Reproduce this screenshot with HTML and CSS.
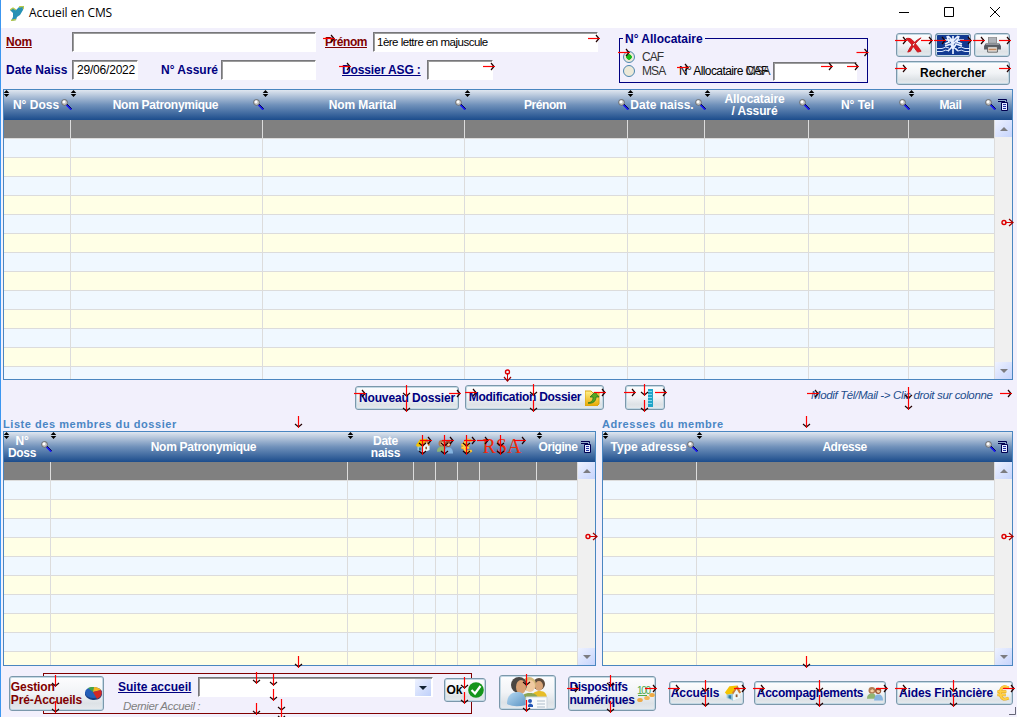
FILE: index.html
```
<!DOCTYPE html>
<html lang="fr">
<head>
<meta charset="utf-8">
<title>Accueil en CMS</title>
<link rel="stylesheet" href="styles.css">
</head>
<body>
<svg class="defs" width="0" height="0">
  <defs>
    <linearGradient id="blue" x1="0" y1="0" x2="1" y2="1"><stop offset="0" stop-color="#b8daf2"/><stop offset="1" stop-color="#5b94c4"/></linearGradient>
    <linearGradient id="gold" x1="0" y1="0" x2="0" y2="1"><stop offset="0" stop-color="#fff08a"/><stop offset="1" stop-color="#e8a800"/></linearGradient>
    <symbol id="mag" viewBox="0 0 11 11"><path d="M6 5L10.800 9.800" stroke="#000" stroke-width="1"/><path d="M5.300 5.700L10.300 10.700" stroke="#1818f0" stroke-width="1.700"/><circle cx="3.500" cy="3.400" r="2.900" fill="#c8c8c8" stroke="#5a5a5a" stroke-width=".8"/><circle cx="3" cy="2.800" r="1.400" fill="#fff"/></symbol>
    <symbol id="sort" viewBox="0 0 6 7"><path d="M.2 3L3 0L5.800 3ZM.2 4L3 7L5.800 4Z" fill="#000"/></symbol>
    <symbol id="menu" viewBox="0 0 10 12"><path d="M0 .5H8.500V2.500M0 2.500H7" fill="none" stroke="#000050"/><path d="M3.500 3.500H9.500V11.500H3.500Z" fill="#e4eaff" stroke="#000050"/><path d="M5 5.500H8M5 7.500H8M5 9.500H8" stroke="#2030a0"/></symbol>
    <symbol id="house" viewBox="0 0 20 18"><path d="M3 8L11 3L18 9V14L10 17L3 14Z" fill="#9bc8da"/><path d="M10 10V17L18 14V8L14 4Z" fill="#eef6f6"/><path d="M1 8L6 1L15 0L10 9L3 10Z" fill="#f5c400"/><path d="M15 0L19 8L17 9L14 4L10 10L9 8Z" fill="#cf7c32"/><path d="M5 11H8V15L5 14Z" fill="#347ea0"/><path d="M13 10H15V13H13Z" fill="#8a5a35"/></symbol>
    <symbol id="pair" viewBox="0 0 18 16"><circle cx="5.500" cy="4.500" r="3.800" fill="#b17b50"/><path d="M3.500 5A2.500 3 0 0 0 8 5L6 3Z" fill="#f3cda2"/><path d="M0 14C0 9 3 8 6 8C9 8 10 10 10 14Z" fill="#8fb573"/><circle cx="12.500" cy="5" r="3.500" fill="#984f2f"/><path d="M10.500 5A2.300 3 0 0 0 15 5L12 4Z" fill="#f3cda2"/><path d="M8 16C8 11 10 9 13 9C16 9 18 11 18 16Z" fill="#86b4e0"/></symbol>
    <symbol id="euro" viewBox="0 0 14 17"><path d="M12.500 3C7 -.5 3.500 3 3.500 8.500C3.500 14 7 17 12.500 13.800M.5 7H10M.5 10.500H9.500" fill="none" stroke="#e2a410" stroke-width="3"/><path d="M12.500 3C7 -.5 3.500 3 3.500 8.500C3.500 14 7 17 12.500 13.800M.5 7H10M.5 10.500H9.500" fill="none" stroke="#ffcf45" stroke-width="2"/></symbol>
  </defs>
</svg>
<div class="window">
  <header class="titlebar">
    <svg class="logo" width="14" height="15" viewBox="0 0 14 15"><path d="M0 4L3 2L6 4L9 1L14 0L13 4L10 9L7 11L6 14L1 15L3 11V7Z" fill="#2792b5"/><path d="M0 4L3 2L6 4M9 1L14 0L13 3M1 14.500L6 13.500" fill="none" stroke="#b9c94a" stroke-width="1.300"/></svg>
    <span class="title">Accueil en CMS</span>
    <svg class="winbtns" width="106" height="12" viewBox="0 0 106 12"><path d="M0 5.500H10M45.500 .5H54.500V9.500H45.500ZM91 0L101 10M101 0L91 10" fill="none" stroke="#000"/></svg>
  </header>

  <section class="search">
    <div class="fields">
      <div class="row">
        <label class="lbl red w66"><u class="tight">Nom</u></label><div class="field w244"></div>
        <label class="lbl red w48 gap9"><u class="tighter">Prénom</u></label><div class="field w225"><span class="sample">1ère lettre en majuscule</span></div>
      </div>
      <div class="row">
        <label class="lbl w66"><span>Date Naiss</span></label><div class="field w66"><span class="date">29/06/2022</span></div>
        <label class="lbl w60 gap23"><span>N° Assuré</span></label><div class="field w95"></div>
        <label class="lbl w85 gap26"><u class="snug">Dossier ASG :</u></label><div class="field w66"></div>
      </div>
    </div>
    <div class="group">
      <div class="legend">N° Allocataire</div>
      <div class="opt"><i class="radio on"></i><span class="choice">CAF</span></div>
      <div class="opt"><i class="radio"></i><span class="choice">MSA</span><span class="numlbl">N° Allocataire CAF<b class="over">MSA</b></span><div class="field w84"></div></div>
    </div>
    <div class="tools">
      <div class="toolrow">
        <button class="btn tool"><svg width="18" height="16" viewBox="0 0 20 18"><path d="M1 2C6 0 9 4 11 7C14 10 16 13 18 16L14 17C10 12 6 6 1 2ZM18 1C13 3 6 9 3 17L6 16C9 10 13 5 18 1Z" fill="#dc1820" stroke="#c01018"/></svg></button>
        <button class="btn tool navy"><svg width="33" height="22" viewBox="0 0 33 22"><path d="M0 14.500H5Q9 12 12 14M33 14.500H28Q24 12 21 14M0 17.500H5Q9 15 12 17M33 17.500H28Q24 15 21 17" fill="none" stroke="#dce8ff"/><path d="M11 2L16 7L21 2M16 2V20M7 6H13L16 10L20 6H27M8 12L14 10L16 15L19 10L25 12M11 17L16 12L21 17M10 2L12 8L8 10M22 2L20 8L25 10" fill="none" stroke="#e9f0ff" stroke-width="1.700"/></svg></button>
        <button class="btn tool"><svg width="17" height="16" viewBox="0 0 19 18"><path d="M5 0H14V7H5Z" fill="#aeb2b8" stroke="#888"/><path d="M2 7H17L19 10V14H0V10Z" fill="#555b63"/><path d="M2 8H17" stroke="#c5c8cc"/><path d="M4 11H15V17H4Z" fill="#eee" stroke="#555"/><path d="M5 13H14V15H5Z" fill="#c48a5e"/></svg></button>
      </div>
      <button class="btn find"><span>Rechercher</span></button>
    </div>
  </section>

  <section class="table main">
    <div class="thead">
      <div class="th doss"><svg class="sort"><use href="#sort"/></svg><span>N° Doss</span><svg class="mag"><use href="#mag"/></svg></div>
      <div class="th"><svg class="sort"><use href="#sort"/></svg><span class="tight">Nom Patronymique</span><svg class="mag"><use href="#mag"/></svg></div>
      <div class="th"><svg class="sort"><use href="#sort"/></svg><span class="snug">Nom Marital</span><svg class="mag"><use href="#mag"/></svg></div>
      <div class="th"><svg class="sort"><use href="#sort"/></svg><span class="tighter">Prénom</span><svg class="mag"><use href="#mag"/></svg></div>
      <div class="th dn"><svg class="sort"><use href="#sort"/></svg><span>Date naiss.</span><svg class="mag"><use href="#mag"/></svg></div>
      <div class="th alloc"><svg class="sort"><use href="#sort"/></svg><span class="snug">Allocataire<br>/ Assuré</span><svg class="mag"><use href="#mag"/></svg></div>
      <div class="th"><svg class="sort"><use href="#sort"/></svg><span>N° Tel</span><svg class="mag"><use href="#mag"/></svg></div>
      <div class="th"><svg class="sort"><use href="#sort"/></svg><span class="tight">Mail</span><svg class="mag"><use href="#mag"/></svg></div>
      <div class="th end"><svg class="menu"><use href="#menu"/></svg></div>
    </div>
    <div class="tbody"><i></i><i></i><i></i><i></i><i></i><i></i><i></i><i></i><div class="scroll"><b class="up"></b><b class="down"></b></div></div>
  </section>

  <section class="mid">
    <button class="btn nouveau"><span class="snug">Nouveau Dossier</span></button>
    <button class="btn modif"><span class="tight">Modification Dossier</span><svg width="15" height="16" viewBox="0 0 15 16"><path d="M0 1H6L8 3H14V14L12 16H0Z" fill="url(#gold)" stroke="#d9a512"/><path d="M3 13C8 12 8 9 8 7H5L10 2L14 7H11C11 11 8 14 3 13Z" fill="#55a820" stroke="#26701c" stroke-width=".8"/></svg></button>
    <button class="btn column"><svg width="5" height="18" viewBox="0 0 5 18"><path d="M0 0H5V18H0Z" fill="#20a4c8"/><path d="M0 2.500H4M0 5.500H4M0 8.500H4M0 11.500H4M0 14.500H4" stroke="#80d8ec"/></svg></button>
    <em class="hint">Modif Tél/Mail -&gt; Clic droit sur colonne</em>
  </section>

  <section class="lower">
    <div class="panel left">
      <h2>Liste des membres du dossier</h2>
      <div class="table members">
        <div class="thead">
          <div class="th nd"><svg class="sort"><use href="#sort"/></svg><span class="tight">N°<br>Doss</span><svg class="mag"><use href="#mag"/></svg></div>
          <div class="th np"><svg class="sort"><use href="#sort"/></svg><span class="tight">Nom Patronymique</span></div>
          <div class="th nb"><svg class="sort"><use href="#sort"/></svg><span class="tight">Date<br>naiss</span></div>
          <div class="th ico"><svg width="16" height="16"><use href="#house"/></svg></div>
          <div class="th ico"><svg width="16" height="15"><use href="#pair"/></svg></div>
          <div class="th ico"><svg width="12" height="16"><use href="#euro"/></svg></div>
          <div class="th rsa"><span>RSA</span></div>
          <div class="th orig"><svg class="sort"><use href="#sort"/></svg><span class="tighter">Origine</span></div>
          <div class="th end"><svg class="menu"><use href="#menu"/></svg></div>
        </div>
        <div class="tbody"><i></i><i></i><i></i><i></i><i></i><i></i><i></i><i></i><div class="scroll"><b class="up"></b><b class="down"></b></div></div>
      </div>
    </div>
    <div class="panel right">
      <h2>Adresses du membre</h2>
      <div class="table addresses">
        <div class="thead">
          <div class="th"><svg class="sort"><use href="#sort"/></svg><span>Type adresse</span><svg class="mag"><use href="#mag"/></svg></div>
          <div class="th"><svg class="sort"><use href="#sort"/></svg><span class="tighter">Adresse</span><svg class="mag"><use href="#mag"/></svg></div>
          <div class="th end"><svg class="menu"><use href="#menu"/></svg></div>
        </div>
        <div class="tbody"><i></i><i></i><div class="scroll"><b class="up"></b><b class="down"></b></div></div>
      </div>
    </div>
  </section>

  <footer class="bottom">
    <button class="btn gestion"><span class="snug">Gestion<br>Pré-Accueils</span><svg width="17" height="13" viewBox="0 0 17 13"><path d="M0 5V8C2 12 6 13 9 13C14 13 17 10 17 7V4Z" fill="#183f82"/><ellipse cx="8.500" cy="5.500" rx="8.500" ry="5.500" fill="#245fb8"/><path d="M8 5L3 1C6 -.3 8 0 9 0Z" fill="#42a447"/><path d="M8 5L9 0C13 0 15 2 16 3Z" fill="#f5b51c"/><path d="M8 5L16 3C18 7 16 10 12 12Z" fill="#d32824"/></svg></button>
    <div class="suite">
      <div class="suiterow"><label class="lbl"><u>Suite accueil</u></label><div class="field select"><b class="drop"></b></div></div>
      <em class="last">Dernier Accueil :</em>
    </div>
    <button class="btn ok"><span>Ok</span><svg width="16" height="16" viewBox="0 0 16 16"><circle cx="8" cy="8" r="7.800" fill="#15951b"/><path d="M3.500 8L7 11.500L12.500 4" fill="none" stroke="#fff" stroke-width="2.200"/></svg></button>
    <button class="btn people"><svg width="44" height="32" viewBox="0 0 44 32"><circle cx="33" cy="7" r="6" fill="#5c4a3a"/><ellipse cx="33" cy="9" rx="4" ry="5" fill="#d9a679"/><path d="M25 24C25 16 29 14 34 14C39 14 41 17 41 22Z" fill="#e7bd28"/><circle cx="23" cy="7" r="7" fill="#d6bb7c"/><ellipse cx="24" cy="9" rx="5" ry="6" fill="#f0caa0"/><path d="M15 25C15 18 18 16 24 16C29 16 32 18 32 23Z" fill="#8ba554"/><circle cx="13" cy="8" r="8" fill="#4b4743"/><ellipse cx="15" cy="10" rx="5" ry="7" fill="#d8a174"/><path d="M1 27C1 19 5 15 12 15C18 15 20 20 20 28Q8 31 1 27Z" fill="url(#blue)"/><path d="M20 20H41V32H20Z" fill="#f8fafc" stroke="#ccd5df"/><path d="M24 22A2 2 0 1 1 24 26A2 2 0 1 1 24 22M22 30V28Q24 25 27 28V30Z" fill="#2456b5"/><path d="M31 24H39M31 27H39M31 30H39" stroke="#aebdcb"/></svg></button>
    <button class="btn dispo"><span class="tight">Dispositifs<br>numériques</span><svg width="18" height="18" viewBox="0 0 18 18"><text x="0" y="9" class="cent" textLength="14">100</text><path d="M1 10.500H10" stroke="#4ca94a"/><ellipse cx="3" cy="15" rx="2.800" ry="2" fill="#edaa49"/><ellipse cx="10" cy="13" rx="2.800" ry="2" fill="#f2b75b"/><ellipse cx="15" cy="10" rx="2.800" ry="2" fill="#efaa43"/></svg></button>
    <button class="btn acc"><span class="snug">Accueils</span><svg width="18" height="17"><use href="#house"/></svg></button>
    <button class="btn accomp"><span class="tight">Accompagnements</span><svg width="16" height="15"><use href="#pair"/></svg></button>
    <button class="btn aides"><span class="snug">Aides Financière</span><svg width="13" height="16"><use href="#euro"/></svg></button>
  </footer>
</div>

<svg class="marks" width="1017" height="717" viewBox="0 0 1017 717">
  <defs>
    <g id="ar"><path d="M-12 0H-1" stroke="#f00" stroke-width="1.200"/><path d="M-4 -3.500L-1 0L-4 3.500" fill="none" stroke="#200" stroke-width="1.200"/><path d="M-3 0H0" stroke="#e00"/></g>
    <g id="ad"><path d="M0 -12V-1" stroke="#f00" stroke-width="1.200"/><path d="M-3.500 -4L0 -1L3.500 -4" fill="none" stroke="#200" stroke-width="1.200"/><path d="M0 -3V0" stroke="#e00"/></g>
    <g id="ac"><path d="M-8 0H0" stroke="#d00"/><circle cx="-9" cy="0" r="2" fill="none" stroke="#d00" stroke-width="1.400"/><path d="M-4 -3.500L0 0L-4 3.500" fill="none" stroke="#900" stroke-width="1.200"/></g>
  </defs>
  <g>
    <use href="#ar" x="335" y="38.500"/><use href="#ar" x="600" y="38.500"/><use href="#ar" x="351" y="66.500"/><use href="#ar" x="495" y="66.500"/>
    <use href="#ar" x="630" y="52.500"/><use href="#ar" x="868.500" y="52.500"/><use href="#ar" x="689" y="67.500"/><use href="#ar" x="833" y="66.500"/><use href="#ar" x="859" y="66.500"/>
    <use href="#ar" x="907" y="40.500"/><use href="#ar" x="933" y="40.500"/><use href="#ar" x="946" y="40.500"/><use href="#ar" x="972" y="40.500"/><use href="#ar" x="985" y="40.500"/><use href="#ar" x="1011" y="40.500"/>
    <use href="#ar" x="907" y="68.500"/><use href="#ar" x="1011" y="68.500"/>
    <use href="#ac" x="1013" y="222.500"/><use href="#ac" x="597" y="536.500"/><use href="#ac" x="1013" y="536.500"/>
    <use href="#ac" transform="translate(507.500 381) rotate(90)"/>
    <use href="#ar" x="366" y="393.500"/><use href="#ar" x="461" y="393.500"/><use href="#ar" x="477" y="392.500"/><use href="#ar" x="606" y="392.500"/><use href="#ar" x="636" y="392.500"/><use href="#ar" x="667" y="392.500"/><use href="#ar" x="819" y="393.500"/><use href="#ar" x="1012" y="393.500"/>
    <use href="#ar" x="432" y="440.500"/><use href="#ar" x="454" y="440.500"/><use href="#ar" x="476" y="440.500"/><use href="#ar" x="489" y="440.500"/><use href="#ar" x="526" y="440.500"/>
    <use href="#ar" x="579" y="688.500"/><use href="#ar" x="657" y="688.500"/><use href="#ar" x="680" y="688.500"/><use href="#ar" x="746" y="688.500"/><use href="#ar" x="765" y="688.500"/><use href="#ar" x="888" y="688.500"/><use href="#ar" x="907" y="688.500"/><use href="#ar" x="1015" y="688.500"/>
  </g>
  <g>
    <use href="#ad" x="406.500" y="397"/><use href="#ad" x="406.500" y="412"/><use href="#ad" x="533.500" y="396"/><use href="#ad" x="533.500" y="412"/><use href="#ad" x="644.500" y="396"/><use href="#ad" x="644.500" y="412"/><use href="#ad" x="908.500" y="399"/><use href="#ad" x="908.500" y="410"/>
    <use href="#ad" x="298.500" y="428"/><use href="#ad" x="806.500" y="428"/><use href="#ad" x="298.500" y="668"/><use href="#ad" x="806.500" y="668"/>
    <use href="#ad" x="422.500" y="447"/><use href="#ad" x="422.500" y="455"/><use href="#ad" x="444.500" y="447"/><use href="#ad" x="444.500" y="455"/><use href="#ad" x="466.500" y="447"/><use href="#ad" x="466.500" y="455"/><use href="#ad" x="500.500" y="447"/><use href="#ad" x="500.500" y="455"/>
    <use href="#ad" x="55.500" y="687"/><use href="#ad" x="55.500" y="713"/><use href="#ad" x="256.500" y="684"/><use href="#ad" x="256.500" y="715"/><use href="#ad" x="273.500" y="686"/><use href="#ad" x="273.500" y="701"/><use href="#ad" x="281.500" y="711"/><use href="#ad" x="281.500" y="720"/>
    <use href="#ad" x="464.500" y="689"/><use href="#ad" x="464.500" y="704"/><use href="#ad" x="526.500" y="686"/><use href="#ad" x="526.500" y="712"/><use href="#ad" x="610.500" y="687"/><use href="#ad" x="610.500" y="713"/><use href="#ad" x="705.500" y="692"/><use href="#ad" x="705.500" y="707"/><use href="#ad" x="819.500" y="692"/><use href="#ad" x="819.500" y="707"/><use href="#ad" x="953.500" y="692"/><use href="#ad" x="953.500" y="707"/>
  </g>
  <path d="M1015.500 707V714.500H1009" fill="none" stroke="#667"/>
</svg>
</body>
</html>
```
FILE: styles.css
```
*, ::before, ::after { box-sizing: border-box; }
body { margin: 0; width: 1017px; height: 717px; overflow: hidden; position: relative; font: bold 12px/13px "Liberation Sans", Arial, sans-serif; color: #000080; }
.defs { position: absolute; }
.window { width: 1017px; height: 717px; background: #f2f0fc; border-left: 1px solid #3c96f0; display: flex; flex-direction: column; overflow: hidden; }
svg { flex: none; }
span, u, em { white-space: nowrap; }
.snug { letter-spacing: -.12px; }
.tight { letter-spacing: -.28px; }
.tighter { letter-spacing: -.45px; }

.titlebar { height: 28px; flex: none; background: #fff; display: flex; align-items: center; padding: 0 17px 2px 9px; }
.title { font: 12px/16px "Open Sans", "Noto Sans", sans-serif; color: #000; margin-left: 5px; flex: 1; letter-spacing: -.1px; }
.winbtns { margin-right: -5px; }

.search { height: 61px; flex: none; display: flex; }
.fields { width: 618px; padding: 4px 0 0 5px; display: flex; flex-direction: column; gap: 8px; }
.row { display: flex; height: 20px; }
.lbl { line-height: 20px; flex: none; color: #000080; }
.lbl.red { color: #800000; }
.field { height: 20px; flex: none; background: #fff; border: 1px solid; border-color: #77777b #fff #fff #77777b; box-shadow: inset 1px 1px #9c9c9c; font-weight: normal; color: #000; line-height: 19px; padding-left: 3px; }
.sample { font-size: 11.5px; letter-spacing: -.5px; }
.date { letter-spacing: -.2px; margin-left: 1px; }
.w66 { width: 66px; } .w244 { width: 244px; } .w48 { width: 48px; } .w225 { width: 225px; }
.w60 { width: 60px; } .w95 { width: 95px; } .w85 { width: 85px; } .w84 { width: 84px; }
.gap9 { margin-left: 9px; } .gap23 { margin-left: 23px; } .gap26 { margin-left: 26px; }

.group { width: 249px; height: 45px; margin-top: 10px; border: 1px solid #000080; padding-left: 3px; }
.legend { width: max-content; background: #f2f0fc; padding: 0 2px; margin: -6px 0 5px 0; line-height: 13px; height: 12px; }
.opt { height: 14px; display: flex; align-items: center; font-weight: normal; color: #333; }
.radio { width: 12px; height: 12px; flex: none; border: 1px solid #4c86b0; border-radius: 50%; background: #ece9d8; }
.radio.on { background: radial-gradient(circle, #18b818 0 2.5px, #ece9d8 3px); }
.choice { margin-left: 7px; width: 24px; letter-spacing: -.9px; }
.numlbl { margin-left: 13px; position: relative; color: #000; width: 91px; letter-spacing: -.6px; }
.over { position: absolute; right: 0; top: 0; font-weight: normal; color: #333; }
.opt .field { margin-left: 3px; height: 19px; }

.tools { margin: 5px 0 0 28px; width: 114px; display: flex; flex-direction: column; gap: 4px; }
.toolrow { display: flex; gap: 3px; }
.btn { flex: none; font: inherit; color: #000080; border: 1px solid #7b98ab; border-radius: 3px; padding: 0; background: linear-gradient(#fdfdfe, #f1f3f6 50%, #dde2e6 80%, #e6eaee); box-shadow: inset 0 0 0 1px #c3d8e4; display: flex; align-items: center; justify-content: center; text-align: left; }
.tool { width: 36px; height: 24px; }
.tool.navy { background: #123a92; }
.find { height: 24px; color: #000; }

.table { border: 1px solid #4a86c0; display: flex; flex-direction: column; flex: none; }
.thead, .tbody { display: grid; }
.main { width: 1010px; height: 291px; margin-left: 2px; }
.main > div { grid-template-columns: 67px 192px 202px 163px 77px 104px 100px 86px 17px; }
.members > div { grid-template-columns: 47px 297px 66px 22px 22px 22px 57px 41px 17px; }
.addresses > div { grid-template-columns: 94px 298px 17px; }
.thead { height: 30px; flex: none; background: linear-gradient(#dfe6ef, #6f90ba 50%, #1c4d8c); color: #fff; }
.th { position: relative; display: flex; align-items: center; justify-content: center; text-align: center; line-height: 12.500px; padding-right: 3px; }
.th.doss { padding-right: 3px; }
.th.dn { padding-right: 9px; }
.th.alloc { padding-right: 5px; }
.th.nd { padding-right: 11px; }
.th.np { padding: 0 0 0 8px; }
.th.nb { padding: 0 0 0 9px; }
.th.orig { padding: 0 0 0 1px; }
.th.ico { padding: 0 4px 2px 0; }
.sort { position: absolute; left: -1px; top: 0; width: 7px; height: 7px; }
.mag { position: absolute; right: -1px; top: 9px; width: 11px; height: 11px; }
.menu { width: 10px; height: 12px; }
.th.end { padding: 0 1px 0 0; }
.rsa span { font: 20px/20px "Liberation Serif", serif; color: #f02808; margin: -3px 0 0 -10px; }
.tbody { flex: 1; background: linear-gradient(#808080 0 18px, #dcdcdc 18px 19px, transparent 19px), repeating-linear-gradient(#f0f8ff 0 18px, #dcdcdc 18px 19px, #ffffe6 19px 37px, #dcdcdc 37px 38px) 0 19px; }
.tbody i { border-right: 1px solid #dcdcdc; }
.scroll { background: #f0f0f0; display: flex; flex-direction: column; justify-content: space-between; }
.scroll b { height: 17px; background: linear-gradient(135deg, #eef2ff, #c6d4fc); display: flex; align-items: center; justify-content: center; }
.scroll b::after { content: ""; border: 4px solid transparent; border-top: 0; border-bottom: 4px solid #7c7c80; }
.scroll .down::after { border-top: 4px solid #7c7c80; border-bottom: 0; }

.mid { height: 37px; flex: none; display: flex; align-items: flex-start; padding: 5px 0 0 354px; }
.nouveau { width: 104px; height: 24px; margin-top: 1px; }
.modif { width: 139px; height: 25px; margin-left: 6px; gap: 4px; }
.column { width: 40px; height: 25px; margin-left: 21px; padding-left: 11px; }
.hint { margin: 4px 0 0 146px; font-weight: normal; font-size: 11.5px; color: #1c4d8c; letter-spacing: -.36px; }

.lower { display: flex; height: 249px; flex: none; padding-left: 2px; gap: 6px; }
.panel { display: flex; flex-direction: column; }
h2 { margin: 0; height: 14px; flex: none; font: inherit; font-size: 11px; letter-spacing: .55px; color: #4a86c4; line-height: 15px; }
.members { width: 593px; height: 235px; }
.addresses { width: 411px; height: 235px; }

.bottom { height: 51px; flex: none; display: flex; align-items: flex-start; padding-left: 8px; position: relative; }
.bottom::before { content: ""; position: absolute; left: 42px; top: 7px; width: 429px; height: 41px; border: 1px solid #800000; }
.bottom > * { position: relative; }
.gestion { width: 95px; height: 35px; margin-top: 10px; color: #800000; gap: 3px; }
.suite { width: 315px; margin: 11px 0 0 14px; height: 36px; }
.suiterow { display: flex; height: 20px; }
.suiterow .lbl { width: 80px; }
.select { width: 235px; display: flex; justify-content: flex-end; }
.drop { width: 16px; height: 17px; margin: 1px; background: linear-gradient(135deg, #eef2ff, #bfd0fa); display: flex; align-items: center; justify-content: center; }
.drop::after { content: ""; border: 4px solid transparent; border-top-color: #123; border-bottom: 0; }
.last { display: block; font-weight: normal; font-size: 11.5px; color: #808080; margin: 3px 0 0 5px; letter-spacing: -.4px; }
.ok { width: 42px; height: 24px; margin: 12px 0 0 11px; color: #000; gap: 5px; }
.people { width: 57px; height: 35px; margin: 9px 0 0 13px; }
.dispo { width: 88px; height: 35px; margin: 10px 0 0 12px; gap: 2px; }
.cent { font: 10px "Liberation Sans", sans-serif; fill: #4ca94a; }
.acc { width: 75px; height: 24px; margin: 15px 0 0 13px; gap: 5px; }
.accomp { width: 132px; height: 24px; margin: 15px 0 0 10px; gap: 4px; }
.aides { width: 117px; height: 24px; margin: 15px 0 0 10px; gap: 4px; }
.marks { position: absolute; left: 0; top: 0; z-index: 5; pointer-events: none; }
```
